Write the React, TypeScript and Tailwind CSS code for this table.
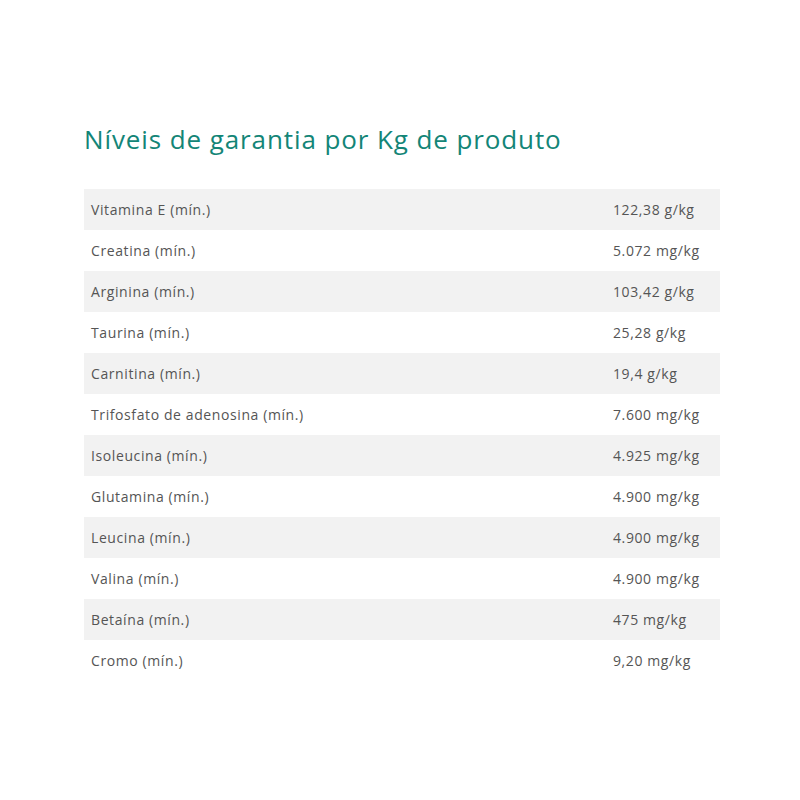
import React from "react";

const rows: [string, string][] = [
  ["Vitamina E (mín.)", "122,38 g/kg"],
  ["Creatina (mín.)", "5.072 mg/kg"],
  ["Arginina (mín.)", "103,42 g/kg"],
  ["Taurina (mín.)", "25,28 g/kg"],
  ["Carnitina (mín.)", "19,4 g/kg"],
  ["Trifosfato de adenosina (mín.)", "7.600 mg/kg"],
  ["Isoleucina (mín.)", "4.925 mg/kg"],
  ["Glutamina (mín.)", "4.900 mg/kg"],
  ["Leucina (mín.)", "4.900 mg/kg"],
  ["Valina (mín.)", "4.900 mg/kg"],
  ["Betaína (mín.)", "475 mg/kg"],
  ["Cromo (mín.)", "9,20 mg/kg"],
];

export default function App() {
  return (
    <div className="w-[800px] h-[800px] bg-white pt-[121px] pl-[84px]" style={{ fontFamily: '"Open Sans", sans-serif' }}>
      <h1 className="text-[26px] leading-[36px] text-[#138577] font-medium tracking-[0.9px]">
        Níveis de garantia por Kg de produto
      </h1>
      <div className="mt-[32px] w-[636px] flex flex-col">
        {rows.map(([name, value], i) => (
          <div key={i} className={`flex h-[41px] items-center text-[14px] tracking-[0.6px] text-[#555555] ${i % 2 === 0 ? "bg-[#f2f2f2]" : "bg-white"}`}>
            <div className="pl-[7px] w-[522px]">{name}</div>
            <div className="pl-[7px]">{value}</div>
          </div>
        ))}
      </div>
    </div>
  );
}
